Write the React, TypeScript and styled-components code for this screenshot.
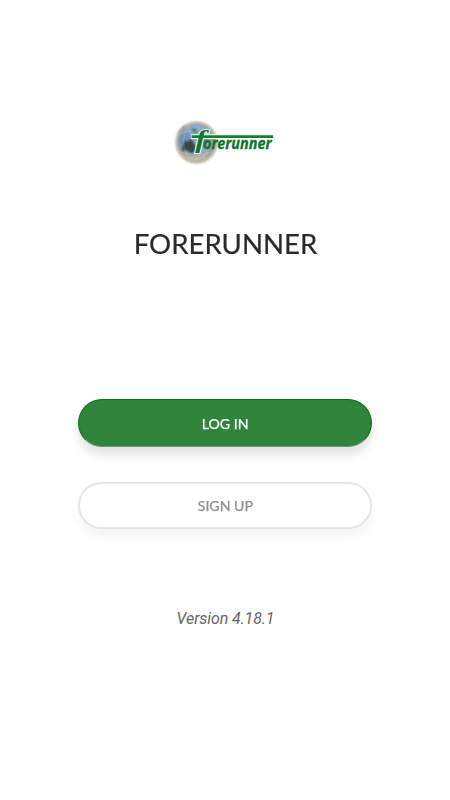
import React from "react";
import styled, { createGlobalStyle, css } from "styled-components";

const GlobalStyle = createGlobalStyle`
  * { box-sizing: border-box; }
  body { margin: 0; background: #fff; }
`;

const Screen = styled.main`
  display: flex;
  flex-direction: column;
  align-items: center;
  width: 100%;
  height: 800px;
  padding-top: 118px;
  background: #fff;
  overflow: hidden;
`;

const Logo = styled.svg`
  display: block;
  width: 106px;
  height: 50px;
  flex: none;
`;

const Title = styled.h1`
  margin: 60px 0 0;
  font: 400 26px/32px Lato, sans-serif;
  color: #2a2a2a;
  white-space: nowrap;
  transform: scaleX(1.062);
  -webkit-text-stroke: 0.2px #2a2a2a;
`;

const Actions = styled.div`
  display: flex;
  flex-direction: column;
  gap: 35px;
  width: 294px;
  margin-top: 139px;
`;

const Button = styled.button<{ $primary?: boolean }>`
  display: flex;
  align-items: center;
  justify-content: center;
  border-radius: 24px;
  ${({ $primary }) =>
    $primary
      ? css`
          height: 48px;
          padding: 1px 0 0;
          border: 1px solid #10701a;
          border-bottom-color: #5f9d65;
          background: #2f833b;
          color: #fff;
          box-shadow: 0 8px 10px rgba(0, 0, 0, 0.11);
        `
      : css`
          height: 47px;
          padding: 1px 0 0;
          border: 2px solid #e6e6e6;
          background: #fff;
          color: #8c9092;
          box-shadow: 0 8px 10px rgba(0, 0, 0, 0.045);
        `}
`;

const Label = styled.span`
  font: 400 14px/20px Lato, sans-serif;
  transform: scaleX(1.01);
  -webkit-text-stroke: 0.25px currentColor;
`;

const Version = styled.p`
  margin: 80px 0 0;
  padding-left: 1px;
  font: italic 400 16px/20px Roboto, sans-serif;
  letter-spacing: -0.1px;
  color: #666;
`;

function ForerunnerLogo() {
  return (
    <Logo viewBox="172 118 106 50" role="img" aria-label="Forerunner">
      <defs>
        <radialGradient id="globe">
          <stop offset="0" stopColor="#86aed8" />
          <stop offset="0.5" stopColor="#8ea9bd" />
          <stop offset="0.75" stopColor="#a09e94" />
          <stop offset="0.88" stopColor="#c9c4b9" stopOpacity="0.85" />
          <stop offset="1" stopColor="#fff" stopOpacity="0" />
        </radialGradient>
        <filter id="soft" x="-20%" y="-20%" width="140%" height="140%">
          <feGaussianBlur stdDeviation="0.8" />
        </filter>
      </defs>
      <circle cx="196.5" cy="142.5" r="23.5" fill="url(#globe)" />
      <g filter="url(#soft)">
        <path d="M187 127l9-3 9 4 5 7-7 1-10-2-7-3z" fill="#8badc9" />
        <path d="M179 136l7-5 5 4-4 6 1 7-6 2-3-7z" fill="#6f94c0" />
        <path d="M182 148l3-8 3 2 2-4 4 5 2 4 3 1-2 4-6 1-5-3-4 1z" fill="#34463f" />
        <path d="M191 128l5 1 2 4-5-1zM198 140l5-3 4 4-5 5-4 0z" fill="#52695d" />
        <path d="M182 154l8 2 9 0 10-4-5 7-8 3-9-3z" fill="#bcb9a5" />
        <path d="M178 134l7-8" stroke="#9a9c90" strokeWidth="2" />
      </g>
      <g fill="none" stroke="#fff" strokeOpacity="0.2" strokeWidth="0.6">
        <path d="M177 135q20-9 38 0M178 151q20 8 36 0M181 156q16 6 31 0" />
        <path d="M190 122q-13 20 0 40M202 122q13 20 0 40" />
      </g>
      <path d="M191 136.6H273.2" stroke="#fff" strokeWidth="4.6" />
      <g fill="#12752a" strokeLinejoin="round">
        <text transform="translate(195 148) scale(1.35 1)" fontFamily="Liberation Serif, serif" fontSize="25" fontWeight="700" fontStyle="italic" stroke="#fff" strokeWidth="1.6" paintOrder="stroke">f</text>
        <text x="203" y="149" fontFamily="Noto Sans, sans-serif" fontSize="15.5" fontWeight="700" fontStyle="italic" textLength="68.5" lengthAdjust="spacingAndGlyphs" stroke="#12752a" strokeWidth="0.35">orerunner</text>
      </g>
      <path d="M191.5 136.6H273.2" stroke="#12812b" strokeWidth="2.6" />
    </Logo>
  );
}

export default function App() {
  return (
    <Screen>
      <GlobalStyle />
      <ForerunnerLogo />
      <Title>FORERUNNER</Title>
      <Actions>
        <Button $primary><Label>LOG IN</Label></Button>
        <Button><Label>SIGN UP</Label></Button>
      </Actions>
      <Version>Version 4.18.1</Version>
    </Screen>
  );
}
